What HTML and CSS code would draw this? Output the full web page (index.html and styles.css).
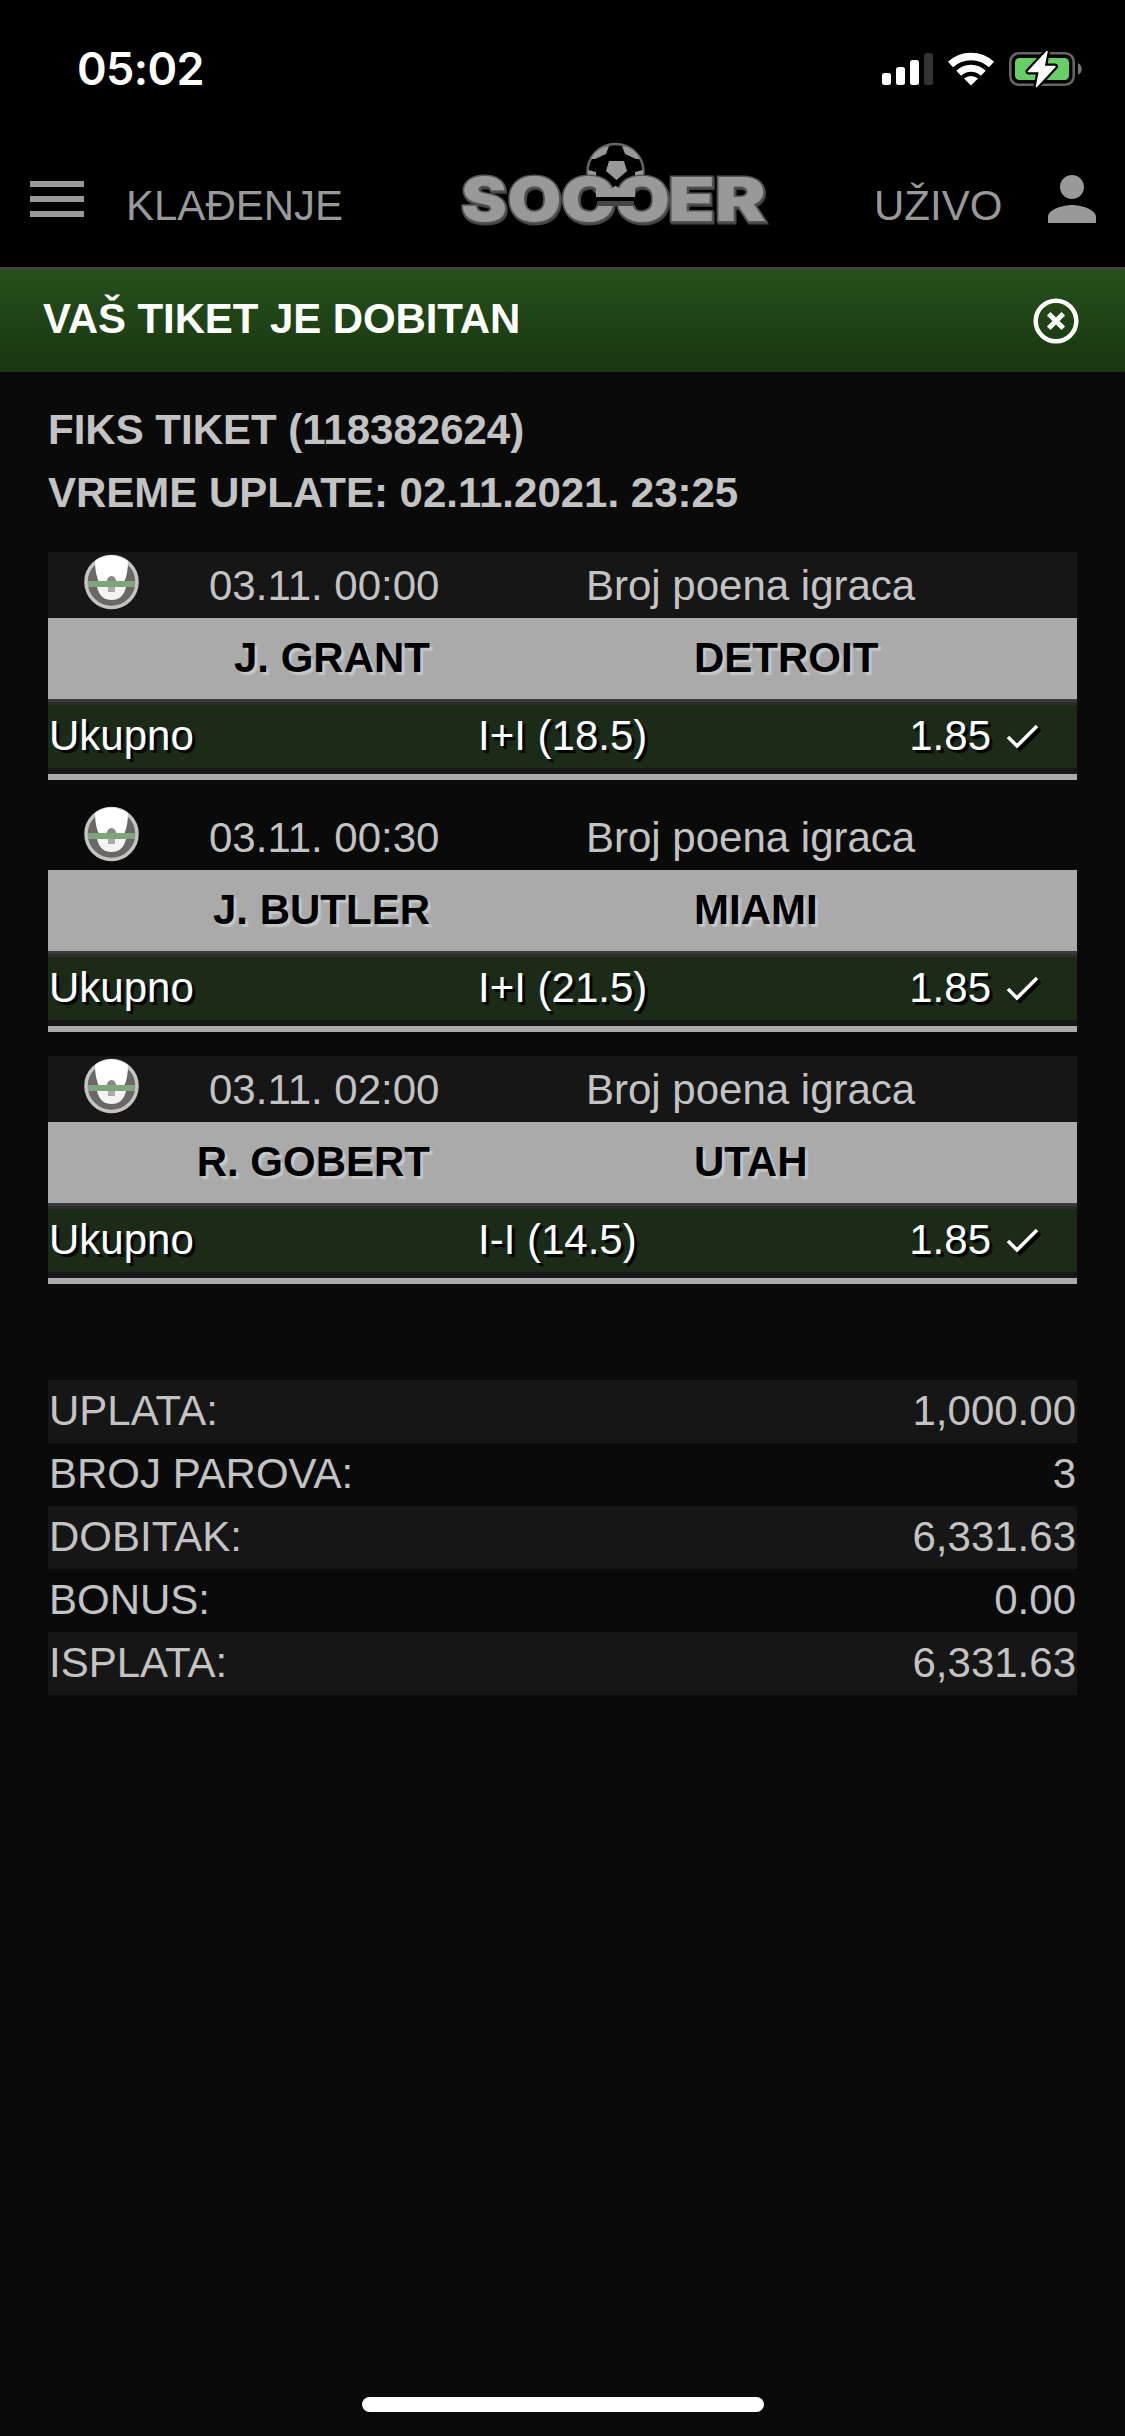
FILE: index.html
```html
<!DOCTYPE html>
<html lang="sr">
<head>
<meta charset="utf-8">
<title>Tiket</title>
<link rel="stylesheet" href="styles.css">
</head>
<body>
<div class="status">
  <span class="clock">05:02</span>
  <svg class="status-icons" viewBox="882 50 202 38" width="202" height="38">
    <g fill="#fff">
      <rect x="882" y="73" width="9" height="12" rx="2.5"/>
      <rect x="896" y="67" width="9" height="18" rx="2.5"/>
      <rect x="910" y="60" width="9" height="25" rx="2.5"/>
      <rect x="924" y="53" width="9" height="32" rx="2.5" fill="#333"/>
    </g>
    <g fill="none" stroke="#fff">
      <path d="M950.5 64.5a30 30 0 0 1 41 0" stroke-width="7.500"/>
      <path d="M958.700 73.200a17.500 17.500 0 0 1 24.600 0" stroke-width="7"/>
    </g>
    <path d="M964 78.500a11 11 0 0 1 14 0L971 85.500z" fill="#fff"/>
    <rect x="1010.300" y="53.300" width="63.400" height="31.400" rx="8.500" fill="none" stroke="#666" stroke-width="2.600"/>
    <rect x="1015" y="58" width="54" height="22" rx="4.500" fill="#68ce67"/>
    <path d="M1078 63.200c5 2 5 9.600 0 11.600z" fill="#777"/>
    <path d="M1047 51.500L1028.500 71.500h11L1036.500 86.500 1055 66.500h-11z" fill="#fff" stroke="#000" stroke-width="6" stroke-linejoin="round"/>
    <path d="M1047 51.500L1028.500 71.500h11L1036.500 86.500 1055 66.500h-11z" fill="#fff" stroke="#fff" stroke-width="1.500" stroke-linejoin="round"/>
  </svg>
</div>
<header class="nav">
  <svg class="nav-icon" viewBox="0 0 24 24"><path d="M3 18h18v-2H3zm0-5h18v-2H3zm0-7v2h18V6z"/></svg>
  <span class="nav-link betting">KLAĐENJE</span>
  <svg class="logo" viewBox="458 140 314 90" width="314" height="90">
    <circle cx="615.500" cy="172" r="28" fill="#000" stroke="#666" stroke-width="2.500"/>
    <g fill="#999">
      <path d="M609 161h15l3 10-10.500 9-10.500-9z"/>
      <path d="M591 159q5-11 18-13l-3 8-11 5z"/>
      <path d="M640 159q-5-11-18-13l3 8 11 5z"/>
      <path d="M588 170l8 2v8h-8zM643 170l-8 2v8h8z"/>
    </g>
    <g class="logo-text">
      <text x="461" y="220.500" textLength="46" lengthAdjust="spacingAndGlyphs">S</text>
      <text x="507.500" y="220.500" textLength="54" lengthAdjust="spacingAndGlyphs">O</text>
      <text x="561" y="220.500" textLength="54" lengthAdjust="spacingAndGlyphs">C</text>
      <text x="-670" y="220.500" textLength="54" lengthAdjust="spacingAndGlyphs" transform="scale(-1 1)">C</text>
      <text x="668" y="220.500" textLength="47" lengthAdjust="spacingAndGlyphs">E</text>
      <text x="715" y="220.500" textLength="51" lengthAdjust="spacingAndGlyphs">R</text>
    </g>
    <path d="M596 189h15l4-3h1l4 3h15v8h-39z" fill="#999"/>
    <path d="M597 201h37v5h-37z" fill="#444"/>
    <path d="M589 197h53v4h-53z" fill="#000"/>
  </svg>
  <span class="nav-link live">UŽIVO</span>
  <svg class="nav-icon" viewBox="0 0 24 24"><path d="M12 12c2.210 0 4-1.790 4-4s-1.790-4-4-4-4 1.790-4 4 1.790 4 4 4zm0 2c-2.670 0-8 1.340-8 4v2h16v-2c0-2.660-5.330-4-8-4z"/></svg>
</header>
<div class="banner">
  <span>VAŠ TIKET JE DOBITAN</span>
  <svg width="46" height="46" viewBox="-23 -23 46 46" fill="none" stroke="#fff" stroke-width="4.500"><circle r="20.300"/><path d="M-7.300-7.300L7.300 7.300M7.300-7.300L-7.300 7.300" stroke-width="5"/></svg>
</div>
<main class="ticket">
  <div class="title">FIKS TIKET (118382624)<br>VREME UPLATE: 02.11.2021. 23:25</div>

  <svg class="defs" width="0" height="0">
    <symbol id="ball" viewBox="0 0 55 57">
      <circle cx="27.500" cy="28" r="25.500" fill="#6b6765" stroke="#c4c4c4" stroke-width="3.500"/>
      <path d="M11 7Q27-4 44 7Q44 20 40 28H15Q11 20 11 7z" fill="#fff"/>
      <path d="M13 33h29q-3 13-14.500 13T13 33z" fill="#f4f4f4"/>
      <path d="M22 30q1-8 5.500-8T33 30z" fill="#888"/>
      <path d="M4 27h47v6H4z" fill="#7fa57d"/>
      <path d="M24 33h7v5h-7z" fill="#aaa"/>
    </symbol>
    <symbol id="check" viewBox="0 0 36 30">
      <path d="M5 17l9 9L34 6" fill="none" stroke="#000" stroke-width="4"/>
      <path d="M2 14l9 9L31 3" fill="none" stroke="#fff" stroke-width="3.500"/>
    </symbol>
  </svg>

  <section class="match">
    <div class="head"><svg class="ball"><use href="#ball"/></svg><span class="time">03.11. 00:00</span><span>Broj poena igraca</span></div>
    <div class="teams"><span class="home">J. GRANT</span><span>DETROIT</span></div>
    <div class="bet"><span class="kind">Ukupno</span><span>I+I (18.5)</span><span class="odds">1.85</span><svg class="check"><use href="#check"/></svg></div>
  </section>
  <section class="match">
    <div class="head"><svg class="ball"><use href="#ball"/></svg><span class="time">03.11. 00:30</span><span>Broj poena igraca</span></div>
    <div class="teams"><span class="home">J. BUTLER</span><span>MIAMI</span></div>
    <div class="bet"><span class="kind">Ukupno</span><span>I+I (21.5)</span><span class="odds">1.85</span><svg class="check"><use href="#check"/></svg></div>
  </section>
  <section class="match">
    <div class="head"><svg class="ball"><use href="#ball"/></svg><span class="time">03.11. 02:00</span><span>Broj poena igraca</span></div>
    <div class="teams"><span class="home">R. GOBERT</span><span>UTAH</span></div>
    <div class="bet"><span class="kind">Ukupno</span><span>I-I (14.5)</span><span class="odds">1.85</span><svg class="check"><use href="#check"/></svg></div>
  </section>

  <div class="summary">
    <div class="row"><span>UPLATA:</span><span>1,000.00</span></div>
    <div class="row"><span>BROJ PAROVA:</span><span>3</span></div>
    <div class="row"><span>DOBITAK:</span><span>6,331.63</span></div>
    <div class="row"><span>BONUS:</span><span>0.00</span></div>
    <div class="row"><span>ISPLATA:</span><span>6,331.63</span></div>
  </div>
</main>
<div class="home-bar"></div>
</body>
</html>
```
FILE: styles.css
```css
* { box-sizing: border-box; }
body {
  margin: 0;
  width: 1125px;
  height: 2436px;
  overflow: hidden;
  display: flex;
  flex-direction: column;
  background: #0a0a0a;
  color: #c3c3c3;
  font: 42px/63px "Liberation Sans", Arial, sans-serif;
  white-space: nowrap;
}
svg { display: block; flex: none; }
.status {
  height: 132px;
  padding: 39px 41px 0 77px;
  display: flex;
  justify-content: space-between;
  background: #000;
}
.status-icons { margin-top: 11px; }
.clock {
  height: 60px;
  color: #fff;
  font: 600 45px/60px Inter, sans-serif;
  letter-spacing: -0.6px;
}
.nav {
  height: 138px;
  display: flex;
  align-items: flex-start;
  background: #000;
  border-bottom: 3px solid #444;
  color: #999;
  padding: 0 17px 0 21px;
}
.nav-icon { width: 72px; height: 72px; margin-top: 31px; fill: #999; }
.nav-link { margin-top: 42px; }
.betting { margin-left: 33px; width: 332px; }
.logo { margin-top: 8px; overflow: visible; }
.live { margin-left: 102px; width: 162px; }
.logo-text { filter: drop-shadow(1px 2px 0 #444); }
.logo-text text {
  font: 900 60px Inter, sans-serif;
  fill: #999;
  stroke: #555;
  stroke-width: 3px;
  paint-order: stroke;
}
.banner {
  height: 102px;
  padding: 0 46px 0 43px;
  display: flex;
  justify-content: space-between;
  align-items: center;
  background: linear-gradient(#25501a, #193611);
  color: #fff;
  font-weight: bold;
}
.banner span { margin-bottom: 5px; letter-spacing: -0.1px; }
.ticket { padding: 26px 48px 0; flex: 1; }
.title { margin: 0 0 28px; font-weight: bold; height: 126px; }
.defs { position: absolute; }
.match { height: 228px; margin-bottom: 24px; }
.match:nth-of-type(odd) { background: #161616; }
.head { height: 66px; display: flex; }
.ball { width: 55px; height: 57px; margin: 2px 0 0 36px; }
.time { margin-left: 70px; width: 377px; }
.head span { padding-top: 2px; }
.teams {
  height: 81px;
  display: grid;
  grid-template-columns: 382px 1fr;
  column-gap: 264px;
  padding-top: 8px;
  background: #aaa;
  color: #000;
  font-weight: bold;
  text-shadow: 3px 3px 1px #c6c6c6;
}
.home { text-align: right; }
.bet {
  height: 81px;
  display: flex;
  padding: 5px 0 0 1px;
  border-bottom: 6px solid #aaa;
  background: linear-gradient(#393939 3px, #2d2d2d 3px 6px, #1c2b18 6px 69px, #161616 69px);
  color: #fff;
  text-shadow: 3px 3px 1px #000;
}
.kind { width: 429px; }
.bet .odds { margin-left: auto; }
.check { width: 36px; height: 30px; margin: 19px 35px 0 15px; }
.summary { margin-top: 96px; }
.row {
  height: 63px;
  padding: 0 1px;
  display: flex;
  justify-content: space-between;
  line-height: 61px;
}
.row:nth-child(odd) { background: #161616; }
.home-bar {
  width: 402px;
  height: 15px;
  border-radius: 8px;
  margin: 0 auto 24px;
  background: #fff;
}
```
